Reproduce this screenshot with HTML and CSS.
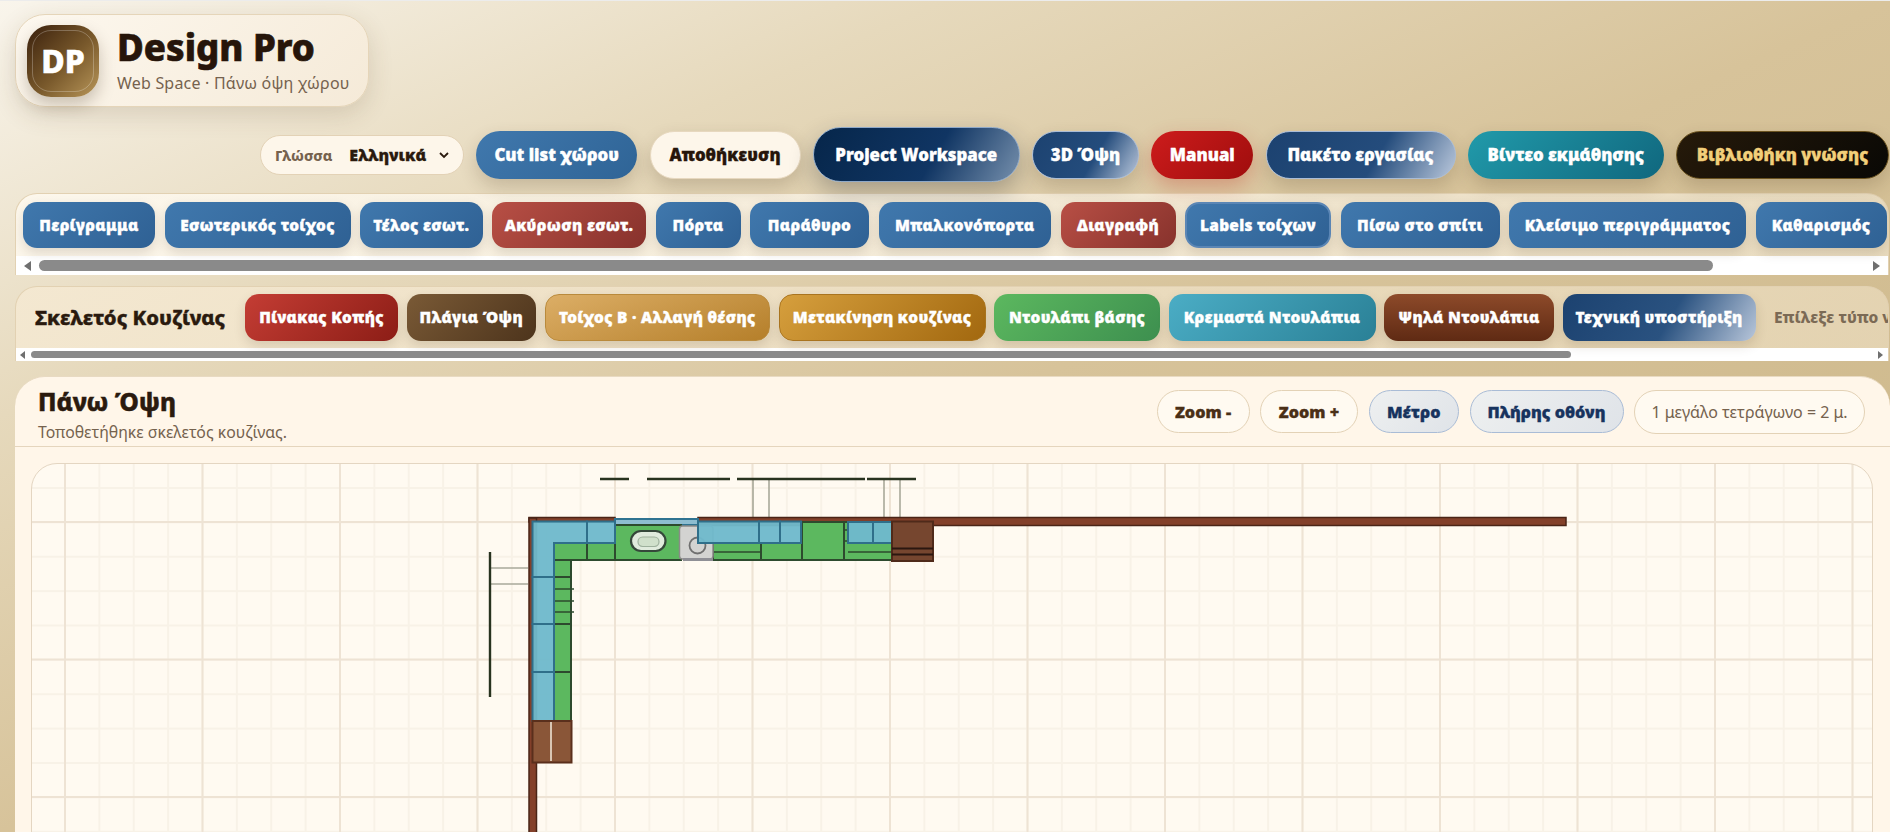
FILE: index.html
```html
<!DOCTYPE html>
<html lang="el">
<head>
    <meta charset="UTF-8">
    <meta name="viewport" content="width=device-width, initial-scale=1.0">
    <title>Design Pro</title>
    <link rel="stylesheet" href="styles.css">
</head>
<body>
    <header class="brand">
        <div class="brand-logo">DP</div>
        <div class="brand-text">
            <h1>Design Pro</h1>
            <p>Web Space · Πάνω όψη χώρου</p>
        </div>
    </header>

    <nav class="actions">
        <label class="lang">
            <span class="lang-label">Γλώσσα</span>
            <span class="lang-value">Ελληνικά</span>
            <svg width="12" height="8" viewBox="0 0 12 8"><path d="M2 2l4 4 4-4" fill="none" stroke="#2a1a0e" stroke-width="1.8"/></svg>
        </label>
        <button class="pill blue">Cut list χώρου</button>
        <button class="pill cream">Αποθήκευση</button>
        <button class="pill workspace">Project Workspace</button>
        <button class="pill navy">3D Όψη</button>
        <button class="pill red">Manual</button>
        <button class="pill navy">Πακέτο εργασίας</button>
        <button class="pill teal">Βίντεο εκμάθησης</button>
        <button class="pill black">Βιβλιοθήκη γνώσης</button>
    </nav>

    <section class="panel">
        <div class="tools">
            <button class="tool blue">Περίγραμμα</button>
            <button class="tool blue">Εσωτερικός τοίχος</button>
            <button class="tool blue">Τέλος εσωτ.</button>
            <button class="tool rust">Ακύρωση εσωτ.</button>
            <button class="tool blue">Πόρτα</button>
            <button class="tool blue">Παράθυρο</button>
            <button class="tool blue">Μπαλκονόπορτα</button>
            <button class="tool rust">Διαγραφή</button>
            <button class="tool blue active">Labels τοίχων</button>
            <button class="tool blue">Πίσω στο σπίτι</button>
            <button class="tool blue">Κλείσιμο περιγράμματος</button>
            <button class="tool blue">Καθαρισμός</button>
        </div>
        <div class="scroll">
            <span class="arrow-left"></span>
            <span class="thumb thumb-tools"></span>
            <span class="arrow-right"></span>
        </div>
    </section>

    <section class="panel panel-kitchen">
        <div class="kitchen">
            <h2>Σκελετός Κουζίνας</h2>
            <button class="tool crimson">Πίνακας Κοπής</button>
            <button class="tool walnut">Πλάγια Όψη</button>
            <button class="tool tan">Τοίχος Β · Αλλαγή θέσης</button>
            <button class="tool gold">Μετακίνηση κουζίνας</button>
            <button class="tool green">Ντουλάπι βάσης</button>
            <button class="tool aqua">Κρεμαστά Ντουλάπια</button>
            <button class="tool chestnut">Ψηλά Ντουλάπια</button>
            <button class="tool support">Τεχνική υποστήριξη</button>
            <span class="hint">Επίλεξε τύπο ντουλαπιού</span>
        </div>
        <div class="scroll scroll-thin">
            <span class="arrow-left"></span>
            <span class="thumb thumb-kitchen"></span>
            <span class="arrow-right"></span>
        </div>
    </section>

    <main class="view">
        <div class="view-head">
            <div class="view-title">
                <h2>Πάνω Όψη</h2>
                <p>Τοποθετήθηκε σκελετός κουζίνας.</p>
            </div>
            <div class="view-controls">
                <button class="ctl">Zoom -</button>
                <button class="ctl">Zoom +</button>
                <button class="ctl ctl-on">Μέτρο</button>
                <button class="ctl ctl-on">Πλήρης οθόνη</button>
                <span class="scale-note">1 μεγάλο τετράγωνο = 2 μ.</span>
            </div>
        </div>

        <div class="canvas">
            <!-- viewBox uses page coordinates so the plan is easy to read off -->
            <svg class="plan" width="1840" height="498" viewBox="32 464 1840 498">
                <!-- measure lines -->
                <g class="guide">
                    <path d="M753 479V517M769 479V517M884 479V517M900 479V517M490 568H528M490 584H528"/>
                </g>
                <g class="measure">
                    <path d="M600 479H629M647 479H730M737 479H865M867 479H916M490 552V697"/>
                </g>

                <!-- walls -->
                <rect class="wall" x="698" y="517.5" width="868" height="8"/>
                <rect class="wall" x="529" y="517.5" width="86" height="4.5"/>
                <rect class="wall" x="529" y="518" width="7.5" height="460"/>
                <rect x="615" y="519" width="83" height="6" fill="#8dbdd0" stroke="#2f7391" stroke-width="2"/>

                <!-- base cabinets -->
                <g class="base">
                    <rect x="554" y="543" width="33" height="17"/>
                    <rect x="587" y="543" width="28" height="17"/>
                    <rect x="615" y="525" width="66" height="35"/>
                    <rect x="713" y="543" width="48" height="17"/>
                    <rect x="761" y="543" width="41" height="17"/>
                    <rect x="802" y="522" width="42" height="38"/>
                    <rect x="844" y="522" width="48" height="38"/>
                    <rect x="554" y="560" width="17" height="17"/>
                    <rect x="554" y="577" width="17" height="47"/>
                    <rect x="554" y="624" width="17" height="48"/>
                    <rect x="554" y="672" width="17" height="49"/>
                </g>
                <path class="thin" d="M713 552H761M848 552H892M554 589H574M554 601H574M554 612H574M844 530H848M844 541H848"/>

                <!-- sink -->
                <rect x="631" y="531" width="34.5" height="20" rx="10" fill="#e0ebdd" stroke="#35483a" stroke-width="2.2"/>
                <rect x="638" y="537" width="21" height="9.5" rx="4.7" fill="#d0e0cb" stroke="#9db09c" stroke-width="1.2"/>

                <!-- stove -->
                <rect x="679.5" y="526" width="33.5" height="33" rx="3" fill="#d3d3d1" stroke="#8b8b88" stroke-width="1.5"/>
                <rect x="683" y="558" width="30" height="3" fill="#8f8f95"/>
                <circle cx="697.5" cy="545.5" r="8" fill="none" stroke="#6f6f6f" stroke-width="1.8"/>

                <!-- wall cabinets -->
                <g class="hang">
                    <path d="M532.5 521.5H587V543H554V577H532.5Z"/>
                    <rect x="587" y="521.5" width="28" height="21.5"/>
                    <rect x="698" y="521.5" width="61" height="21.5"/>
                    <rect x="759" y="521.5" width="21" height="21.5"/>
                    <rect x="780" y="521.5" width="21" height="21.5"/>
                    <rect x="848" y="522" width="25" height="21"/>
                    <rect x="873" y="522" width="19" height="21"/>
                    <rect x="532.5" y="577" width="21.5" height="47"/>
                    <rect x="532.5" y="624" width="21.5" height="48"/>
                    <rect x="532.5" y="672" width="21.5" height="49"/>
                </g>

                <!-- tall cabinets -->
                <rect x="892" y="521.5" width="41" height="39.5" fill="#76462f" stroke="#4f2a1a" stroke-width="2"/>
                <path d="M892 548.5H933M892 554.5H933" stroke="#2b1710" stroke-width="2.2"/>
                <rect x="532.5" y="721" width="39" height="41.5" fill="#8a5638" stroke="#5a2f1c" stroke-width="2"/>
                <path d="M551 722V761" stroke="#d9c6b4" stroke-width="2"/>
            </svg>
        </div>
    </main>
</body>
</html>
```

FILE: styles.css
```css
* {
    margin: 0;
    padding: 0;
    box-sizing: border-box;
    font-family: "Noto Sans", "Open Sans", sans-serif;
}
html, body {
    height: 832px;
    overflow: hidden;
}
body {
    background: linear-gradient(to bottom right, #f9f5ec 0%, #e6d9bc 25%, #d7c39a 50%, #c9b384 100%);
    border-top: 1px solid #ececec;
    color: #2a1a0e;
    padding: 13px 1px 0 15px;
}
button {
    border: none;
    color: #fff;
    font-weight: 900;
    white-space: nowrap;
    -webkit-text-stroke: 0.35px currentColor;
}

/* brand */
.brand {
    width: 354px;
    height: 93px;
    display: flex;
    align-items: center;
    gap: 18px;
    padding-left: 11px;
    background: linear-gradient(135deg, #fdf8ef, #f5ead8);
    border: 1px solid #e5d5b9;
    border-radius: 30px;
    box-shadow: 0 8px 24px rgba(90, 65, 30, 0.16);
}
.brand-logo {
    position: relative;
    width: 72px;
    height: 72px;
    display: flex;
    align-items: center;
    justify-content: center;
    color: #fff;
    font-size: 32px;
    font-weight: 800;
    -webkit-text-stroke: 0.6px #fff;
    background: linear-gradient(135deg, #452a12 10%, #7a5a2c 55%, #b9975a);
    border-radius: 24px;
    box-shadow: 0 8px 16px rgba(60, 40, 15, 0.25);
}
.brand-logo::after {
    content: "";
    position: absolute;
    inset: 5px;
    border: 1px solid rgba(255, 255, 255, 0.25);
    border-radius: 19px;
}
.brand-text h1 {
    font-size: 36.6px;
    font-weight: 800;
    line-height: 40px;
    color: #26150a;
    -webkit-text-stroke: 0.7px #26150a;
}
.brand-text p {
    margin-top: 5px;
    font-size: 16px;
    line-height: 22px;
    letter-spacing: 0.2px;
    color: #75624e;
}

/* top actions */
.actions {
    height: 55px;
    margin-top: 20px;
    display: grid;
    grid-template-columns: 204px 161px 151px 207px 107px 102px 190px 196px 213px;
    justify-content: end;
    align-items: center;
    gap: 12.25px;
}
.lang {
    height: 40px;
    display: flex;
    align-items: center;
    padding-left: 14px;
    background: #fdf6ea;
    border: 1px solid #e3d2b6;
    border-radius: 20px;
}
.lang-label {
    font-size: 14.5px;
    font-weight: 800;
    color: #75624e;
    margin-right: 17px;
}
.lang-value {
    font-size: 16px;
    font-weight: 900;
    -webkit-text-stroke: 0.3px #2a1a0e;
    margin-right: 12px;
}
.pill {
    height: 48px;
    font-size: 16.8px;
    border-radius: 24px;
    box-shadow: 0 8px 18px rgba(70, 50, 25, 0.2);
}
.pill.blue {
    background: linear-gradient(135deg, #4078ad, #2f6496);
}
.cream {
    color: #26150a;
    background: #fdf6ea;
    border: 1px solid #e7d8bf;
}
.workspace {
    height: 55px;
    border-radius: 28px;
    background: linear-gradient(120deg, #06264a, #103563 58%, #7690ad);
    border: 1px solid #8fa9c8;
    box-shadow: 0 10px 24px rgba(40, 45, 50, 0.32);
}
.navy {
    background: linear-gradient(120deg, #1c4270, #244c7c 58%, #bac8dc);
    border: 1px solid #a9bcd6;
}
.red {
    background: linear-gradient(135deg, #cd1c1c, #9f0d0d);
    box-shadow: 0 8px 20px rgba(190, 40, 30, 0.3);
}
.teal {
    background: linear-gradient(135deg, #219aaa, #10677e);
}
.black {
    color: #f2cf7a;
    background: linear-gradient(135deg, #261a0a, #090805);
    border: 1px solid #6b5320;
}

/* tool panels */
.panel {
    margin-top: 11px;
    overflow: hidden;
    background: linear-gradient(135deg, rgba(255, 250, 240, 0.85), rgba(250, 242, 225, 0.55));
    border: 1px solid #e2d1b2;
    border-bottom: none;
    border-radius: 22px 22px 0 0;
}
.panel-kitchen {
    background: linear-gradient(135deg, rgba(245, 233, 210, 0.85), rgba(235, 220, 190, 0.7));
}
.tools {
    height: 62px;
    padding: 8px 0 0 7px;
    display: grid;
    grid-template-columns: 132px 186px 122.5px 154px 85px 119px 172.5px 115px 146px 159px 237px 131px;
    gap: 9.5px;
    align-items: start;
}
.tool {
    height: 46px;
    font-size: 15.4px;
    letter-spacing: 0.3px;
    border-radius: 14px;
    box-shadow: 0 5px 12px rgba(70, 50, 25, 0.15);
}
.tool.blue {
    background: linear-gradient(135deg, #4078ad, #2f6194);
}
.tool.active {
    border: 2px solid #5b86b5;
}
.rust {
    background: linear-gradient(135deg, #b84f45, #87322c);
}
.kitchen {
    height: 61px;
    padding: 7px 0 0 19px;
    display: grid;
    grid-template-columns: 201.5px 153px 129.5px 225.5px 207px 166px 207px 170px 193px 200px;
    gap: 8.5px;
    align-items: start;
}
.kitchen .tool {
    height: 47px;
}
.kitchen h2 {
    height: 47px;
    line-height: 47px;
    font-size: 20.3px;
    font-weight: 800;
    -webkit-text-stroke: 0.4px #2a1a0e;
    white-space: nowrap;
}
.crimson {
    background: linear-gradient(135deg, #c43d34, #8c1d16);
}
.walnut {
    background: linear-gradient(135deg, #7a5a36, #4d341c);
}
.tan {
    background: linear-gradient(160deg, #dcae66, #b57f2a);
    border: 1px solid #b98a3c;
}
.gold {
    background: linear-gradient(135deg, #d69f3d, #a2680f);
    border: 1px solid #a9741f;
}
.green {
    background: linear-gradient(135deg, #5cb85f, #3d8f4f);
}
.aqua {
    background: linear-gradient(135deg, #4badc5, #2a8096);
}
.chestnut {
    background: linear-gradient(180deg, #8d4a2a, #5f2a13);
}
.support {
    background: linear-gradient(120deg, #1c4270, #2a5280 55%, #b8c6da);
}
.hint {
    height: 47px;
    line-height: 47px;
    margin-left: 10px;
    font-size: 15.5px;
    font-weight: 800;
    color: #7b6a55;
    white-space: nowrap;
}

/* fake scrollbars */
.scroll {
    height: 19px;
    display: flex;
    align-items: center;
    background: #fff;
}
.scroll-thin {
    height: 13px;
}
.thumb {
    height: 11px;
    background: #8a8a8a;
    border-radius: 6px;
}
.scroll-thin .thumb {
    height: 7px;
    border-radius: 4px;
}
.thumb-tools {
    width: 1674px;
    margin-left: 8px;
}
.thumb-kitchen {
    width: 1540px;
    margin-left: 6px;
}
.arrow-left,
.arrow-right {
    width: 0;
    height: 0;
    border-top: 5px solid transparent;
    border-bottom: 5px solid transparent;
}
.arrow-left {
    margin-left: 8px;
    border-right: 7px solid #6f6f6f;
}
.arrow-right {
    margin-left: auto;
    margin-right: 8px;
    border-left: 7px solid #6f6f6f;
}
.scroll-thin .arrow-left,
.scroll-thin .arrow-right {
    border-top-width: 4px;
    border-bottom-width: 4px;
}
.scroll-thin .arrow-left {
    margin-left: 4px;
    border-right-width: 5px;
}
.scroll-thin .arrow-right {
    margin-right: 5px;
    border-left-width: 5px;
}

/* top view */
.view {
    margin: 15px -1px 0 0;
    height: 600px;
    background: #fff6e9;
    border-radius: 30px 30px 0 0;
    border-top: 1px solid #e8dac2;
}
.view-head {
    height: 70px;
    display: flex;
    justify-content: space-between;
    align-items: center;
    padding: 0 25px 0 23px;
    border-bottom: 1px solid #e5d5bd;
}
.view-title {
    padding-top: 4px;
}
.view-head h2 {
    font-size: 24.5px;
    font-weight: 800;
    line-height: 34px;
    -webkit-text-stroke: 0.5px #2a1a0e;
}
.view-head p {
    margin-top: 2px;
    font-size: 15.8px;
    line-height: 22px;
    color: #75624e;
}
.view-controls {
    display: grid;
    grid-template-columns: 93px 98px 90.5px 154px 231px;
    gap: 10.5px;
    align-items: center;
}
.ctl {
    height: 43px;
    font-size: 16.2px;
    color: #4a2f16;
    background: #fffaf1;
    border: 1px solid #e3d2b6;
    border-radius: 22px;
}
.ctl-on {
    color: #17335e;
    background: linear-gradient(135deg, #eef0f0, #dfe3e8);
    border-color: #a9bcd6;
}
.scale-note {
    height: 44px;
    line-height: 42px;
    text-align: center;
    font-size: 16px;
    color: #75624e;
    background: #fffaf1;
    border: 1px solid #e3d2b6;
    border-radius: 22px;
}
.canvas {
    height: 500px;
    margin: 16px 17px 0 16px;
    overflow: hidden;
    background-color: #fffaf1;
    background-image:
        linear-gradient(90deg, #eee3d4 1.5px, transparent 1.5px),
        linear-gradient(#eee3d4 1.5px, transparent 1.5px),
        linear-gradient(90deg, #f8f2e7 1.5px, transparent 1.5px),
        linear-gradient(#f8f2e7 1.5px, transparent 1.5px);
    background-size: 137.5px 137.5px, 137.5px 137.5px, 34.375px 34.375px, 34.375px 34.375px;
    background-position: 32px 57px, 32px 57px, 32px 23px, 32px 23px;
    border: 1px solid #e4d6c2;
    border-radius: 26px 26px 0 0;
}
.plan {
    display: block;
}
.guide path {
    fill: none;
    stroke: #a9a99a;
    stroke-width: 1.6;
}
.measure path {
    fill: none;
    stroke: #28331f;
    stroke-width: 2.4;
}
.wall {
    fill: #83402a;
    stroke: #4a2417;
    stroke-width: 1.5;
}
.base rect {
    fill: #5cb85f;
    stroke: #2d4a2e;
    stroke-width: 2;
}
.thin {
    fill: none;
    stroke: #2d4a2e;
    stroke-width: 1.6;
}
.hang path,
.hang rect {
    fill: #6fb9cc;
    fill-opacity: 0.96;
    stroke: #2f6f8a;
    stroke-width: 2;
}
```
